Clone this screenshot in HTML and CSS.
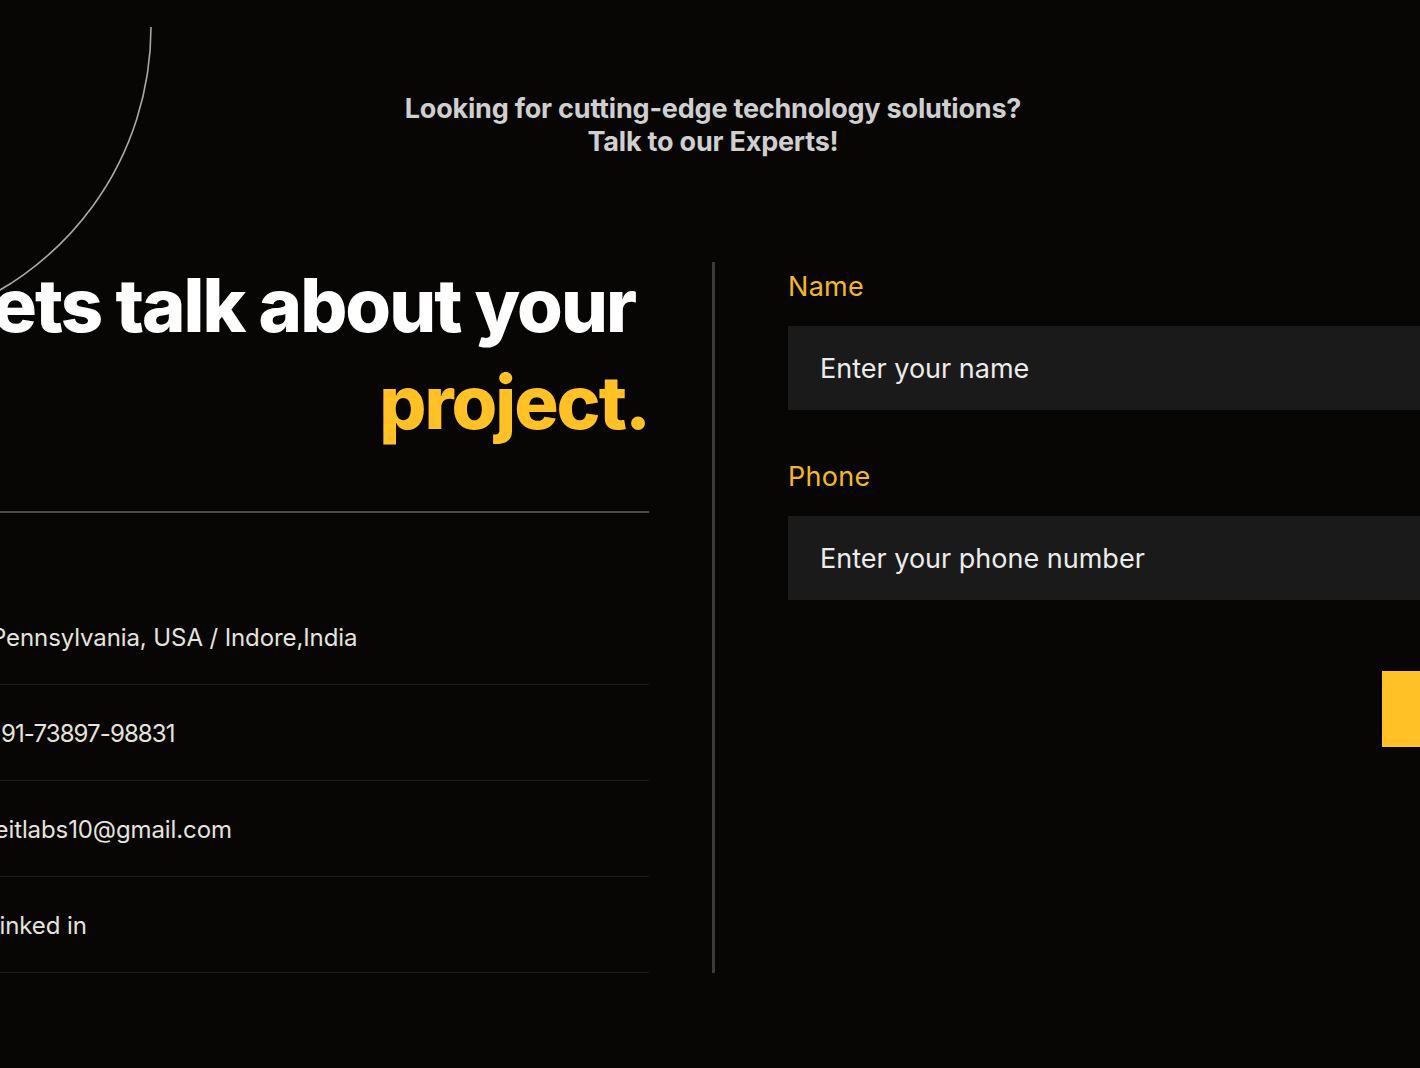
FILE: index.html
```html
<!DOCTYPE html>
<html lang="en">
<head>
<meta charset="utf-8">
<title>Contact</title>
<link rel="stylesheet" href="styles.css">
</head>
<body>
<div class="viewport">
  <svg class="arc" width="220" height="340" viewBox="0 0 220 340" aria-hidden="true">
    <path d="M151 27 A304.5 304.5 0 0 1 -60 316.8" fill="none" stroke="#a9a9a9" stroke-width="1.6"/>
  </svg>

  <header class="intro">
    <p>Looking for cutting-edge technology solutions?<br>Talk to our Experts!</p>
  </header>

  <section class="contact">
    <div class="info">
      <h1 class="title">
        <span class="title-line">Lets talk about your</span>
        <span class="title-accent">project.</span>
      </h1>
      <hr class="divider">
      <ul class="details">
        <li class="addr">Pennsylvania, USA / Indore,India</li>
        <li class="tel">+91-73897-98831</li>
        <li>reitlabs10@gmail.com</li>
        <li>Linked in</li>
      </ul>
    </div>

    <form class="form">
      <label class="field">
        <span class="label">Name</span>
        <input class="input" type="text" placeholder="Enter your name">
      </label>
      <label class="field">
        <span class="label">Phone</span>
        <input class="input" type="tel" placeholder="Enter your phone number">
      </label>
      <button class="submit" type="button">Submit</button>
    </form>
  </section>
</div>
</body>
</html>
```

FILE: styles.css
```css
* { box-sizing: border-box; }

html, body {
  margin: 0;
  padding: 0;
  background: #070605;
}

body {
  font-family: "Inter", "Liberation Sans", sans-serif;
  color: #e9e9e9;
}

.viewport {
  position: relative;
  width: 1420px;
  height: 1068px;
  overflow: hidden;
  background: #070605;
}

.arc {
  position: absolute;
  left: 0;
  top: 0;
  overflow: visible;
}

.intro {
  padding: 92px 0 0 6px;
  text-align: center;
}

.intro p {
  margin: 0;
  font-size: 27px;
  line-height: 33px;
  font-weight: 700;
  letter-spacing: -0.2px;
  color: #cfcfcf;
}

.contact {
  display: grid;
  grid-template-columns: 660px 1fr;
  column-gap: 63px;
  margin: 104px 0 0 -11px;
  width: 1580px;
}

.info {
  display: flex;
  flex-direction: column;
  min-width: 0;
}

.title {
  display: flex;
  flex-direction: column;
  align-items: flex-end;
  margin: -5px 0 0;
  font-size: 74px;
  line-height: 97px;
  font-weight: 800;
  letter-spacing: -2px;
  white-space: nowrap;
}

.title-line {
  color: #ffffff;
  margin-right: 14px;
}

.title-accent {
  color: #ffc125;
}

.divider {
  margin: 60px 0 0;
  border: 0;
  height: 2px;
  background: #4a4a4a;
}

.details {
  list-style: none;
  margin: 76px 0 0;
  padding: 0;
}

.details li {
  display: flex;
  align-items: center;
  height: 96px;
  border-bottom: 1px solid #1c1c1c;
  font-size: 24px;
  letter-spacing: -0.1px;
  color: #e6e3de;
  padding-top: 2px;
  text-indent: -3px;
  white-space: nowrap;
}

.details li.addr {
  text-indent: 2px;
}

.details li.tel {
  letter-spacing: -0.9px;
}

.form {
  display: flex;
  flex-direction: column;
  border-left: 3px solid #3a3a3a;
  padding: 9px 0 0 73px;
}

.field {
  display: flex;
  flex-direction: column;
  margin-bottom: 51px;
}

.label {
  font-size: 27px;
  line-height: 32px;
  letter-spacing: 0.3px;
  color: #f4b922;
  margin-bottom: 23px;
}

.input {
  height: 84px;
  border: 0;
  outline: none;
  background: #1a1a1a;
  padding: 0 32px;
  font-family: inherit;
  font-size: 27px;
  color: #eeeeee;
}

.input::placeholder {
  color: #ececec;
  opacity: 1;
}

.submit {
  align-self: flex-end;
  margin-top: 20px;
  width: 187px;
  height: 76px;
  border: 0;
  background: #ffc125;
  font-family: inherit;
  font-size: 22px;
  font-weight: 700;
  color: #070605;
  padding-left: 70px;
}
```
